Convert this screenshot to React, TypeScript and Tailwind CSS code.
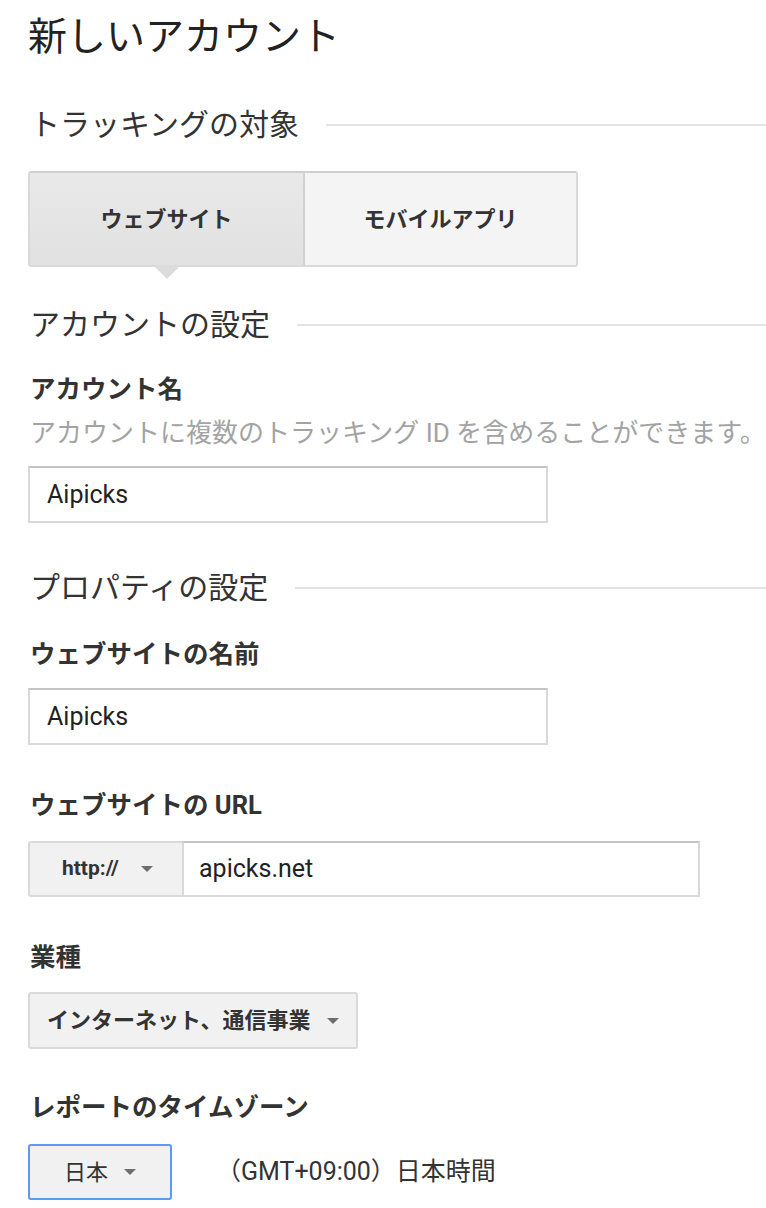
import React from 'react';

// ── Shared bits ───────────────────────────────────────────

const font = 'font-["Roboto","Noto_Sans_CJK_JP",sans-serif]';

function Caret() {
  return <span className="inline-block h-0 w-0 border-x-[6px] border-t-[6px] border-x-transparent border-t-[#6e6e6e]" />;
}

function SectionHeading({ children, className = '' }: { children: React.ReactNode; className?: string }) {
  return (
    <div className={`flex h-[40px] items-center ${className}`}>
      <h2 className="shrink-0 pl-[30px] text-[30px] leading-none font-normal text-[#333]">{children}</h2>
      <div className="ml-[27px] h-[2px] flex-1 bg-[#e3e3e3]" />
    </div>
  );
}

function Label({ children, className = '' }: { children: React.ReactNode; className?: string }) {
  return (
    <div className={`flex h-[30px] items-center pl-[30px] text-[25.5px] leading-none font-bold text-[#333] ${className}`}>
      {children}
    </div>
  );
}

function TextInput({ value, className = '' }: { value: string; className?: string }) {
  return (
    <div
      className={[
        'ml-[28px] flex h-[57px] w-[520px] items-center bg-white px-[17px]',
        'border-2 border-[#d9d9d9] border-t-[#c4c4c4]',
        'text-[25px] text-[#222]',
        className,
      ].join(' ')}
    >
      {value}
    </div>
  );
}

// ── Page ──────────────────────────────────────────────────

export default function App() {
  return (
    <div className={`${font} min-h-[1208px] w-[766px] bg-white`}>
      <div className="flex h-[74px] items-center pl-[28px]">
        <h1 className="text-[39px] leading-none font-normal text-[#222]">新しいアカウント</h1>
      </div>

      <SectionHeading className="mt-[31px]">トラッキングの対象</SectionHeading>

      {/* Tracking target toggle */}
      <div className="relative mt-[26px] ml-[28px] flex h-[96px] w-[550px] rounded-[3px] border-2 border-[#d9d9d9] border-t-[#cfcfcf]">
        <button className="flex w-[275px] items-center justify-center border-r-2 border-[#d2d2d2] bg-gradient-to-b from-[#e9e9e9] to-[#e1e1e1] text-[22px] font-bold text-[#333]">
          ウェブサイト
        </button>
        <button className="flex flex-1 items-center justify-center bg-[#f4f4f4] text-[22px] font-bold text-[#333]">
          モバイルアプリ
        </button>
        <span className="absolute top-full left-[123px] h-0 w-0 border-x-[14px] border-t-[14px] border-x-transparent border-t-[#dcdcdc]" />
      </div>

      <SectionHeading className="mt-[38px]">アカウントの設定</SectionHeading>

      <Label className="mt-[30px]">アカウント名</Label>
      <div className="mt-[13px] flex h-[30px] items-center pl-[30px] text-[26px] leading-none text-[#a3a3a3]">
        アカウントに複数のトラッキング ID を含めることができます。
      </div>
      <TextInput value="Aipicks" className="mt-[18px]" />

      <SectionHeading className="mt-[45px]">プロパティの設定</SectionHeading>

      <Label className="mt-[32px]">ウェブサイトの名前</Label>
      <TextInput value="Aipicks" className="mt-[18px]" />

      <Label className="mt-[46px]">ウェブサイトの URL</Label>
      <div className="mt-[20px] ml-[28px] flex h-[56px] w-[672px]">
        <div className="flex w-[154px] items-center gap-[22px] rounded-l-[3px] border-2 border-r-0 border-[#dadada] bg-[#f1f1f1] pl-[32px] text-[21px] font-bold text-[#333]">
          http://
          <Caret />
        </div>
        <div className="flex flex-1 items-center border-2 border-[#d9d9d9] border-t-[#c4c4c4] pl-[15px] text-[25px] text-[#222]">
          apicks.net
        </div>
      </div>

      <Label className="mt-[46px]">業種</Label>
      <div className="mt-[19px] ml-[28px] flex h-[57px] w-[330px] items-center gap-[16px] rounded-[3px] border-2 border-[#dadada] bg-[#f1f1f1] pl-[17px] text-[22px] font-bold text-[#333]">
        インターネット、通信事業
        <Caret />
      </div>

      <Label className="mt-[44px]">レポートのタイムゾーン</Label>
      <div className="mt-[21px] flex items-center">
        <div className="ml-[28px] flex h-[56px] w-[144px] items-center justify-center gap-[16px] rounded-[3px] border-2 border-[#5b9bf5] bg-[#f1f1f1] text-[22px] text-[#333]">
          日本
          <Caret />
        </div>
        <span className="ml-[44px] text-[25px] text-[#333]">（GMT+09:00）日本時間</span>
      </div>
    </div>
  );
}
